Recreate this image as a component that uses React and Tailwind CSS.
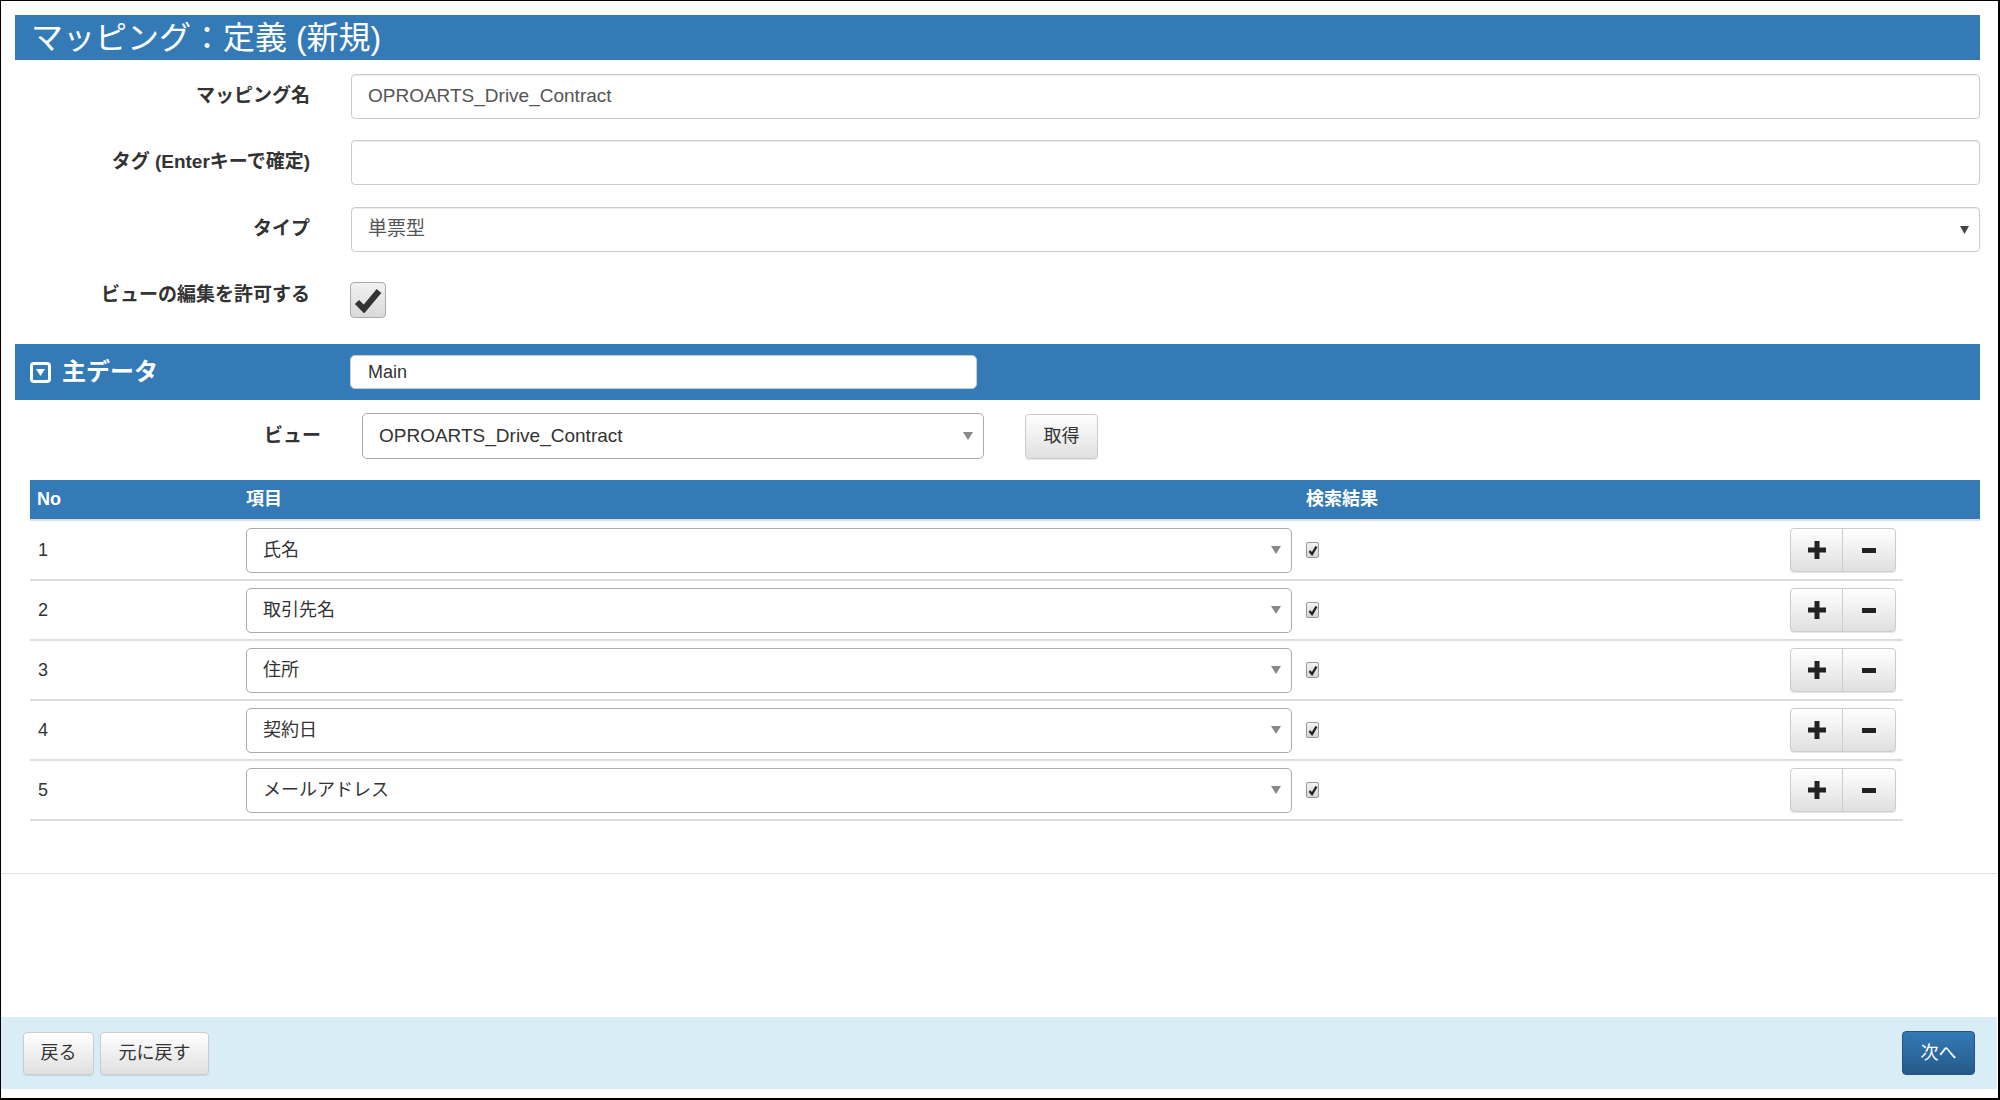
import React from 'react';

const rows = ['氏名', '取引先名', '住所', '契約日', 'メールアドレス'];

function GrayArrow() {
  return (
    <svg width="10" height="8" viewBox="0 0 10 8" className="shrink-0">
      <path d="M0 0 L10 0 L5 8 Z" fill="#888" />
    </svg>
  );
}

function SmallCheck() {
  return (
    <div className="w-[13px] h-[16px] rounded-[2px] border border-[#999] bg-linear-to-b from-[#f4f4f4] to-[#d6d6d6] flex items-center justify-center">
      <svg width="10" height="11" viewBox="0 0 10 11">
        <path d="M1.5 6 L4 9 L8.5 1.5" fill="none" stroke="#222" strokeWidth="2.4" />
      </svg>
    </div>
  );
}

function GradBtn({ children, className = '' }) {
  return (
    <button
      className={`bg-linear-to-b from-white to-[#e0e0e0] border border-[#ccc] rounded-[4px] shadow-[0_1px_1px_rgba(0,0,0,0.1)] text-[18px] text-[#333] flex items-center justify-center ${className}`}
    >
      {children}
    </button>
  );
}

export default function App() {
  return (
    <div className="w-[2000px] h-[1100px] border-l border-t border-r-2 border-b-2 border-black bg-white flex flex-col text-[#333] font-['Liberation_Sans','Noto_Sans_CJK_JP',sans-serif]">
      <div className="pl-[14px] pr-[18px]">
        {/* Title */}
        <div className="mt-[14px] h-[45px] bg-[#337ab7] text-white text-[32px] pl-[16px] flex items-center leading-none">
          マッピング：定義 (新規)
        </div>

        {/* Form */}
        <div className="mt-[14px] flex items-center">
          <div className="w-[295px] text-right text-[19px] font-bold">マッピング名</div>
          <div className="ml-[41px] flex-1 h-[45px] border border-[#ccc] rounded-[4px] shadow-[inset_0_1px_1px_rgba(0,0,0,0.075)] flex items-center pl-[16px] text-[19px] text-[#555]">
            OPROARTS_Drive_Contract
          </div>
        </div>
        <div className="mt-[21px] flex items-center">
          <div className="w-[295px] text-right text-[19px] font-bold">タグ (Enterキーで確定)</div>
          <div className="ml-[41px] flex-1 h-[45px] border border-[#ccc] rounded-[4px] shadow-[inset_0_1px_1px_rgba(0,0,0,0.075)]" />
        </div>
        <div className="mt-[22px] flex items-center">
          <div className="w-[295px] text-right text-[19px] font-bold">タイプ</div>
          <div className="ml-[41px] flex-1 h-[45px] border border-[#ccc] rounded-[4px] shadow-[inset_0_1px_1px_rgba(0,0,0,0.075)] flex items-center pl-[16px] pr-[10px] text-[19px] text-[#555]">
            <span className="flex-1">単票型</span>
            <svg width="9" height="8" viewBox="0 0 9 8">
              <path d="M0 0 L9 0 L4.5 8 Z" fill="#444" />
            </svg>
          </div>
        </div>
        <div className="mt-[30px] flex items-start">
          <div className="w-[295px] text-right text-[19px] font-bold leading-[26px]">ビューの編集を許可する</div>
          <div className="ml-[40px] w-[36px] h-[36px] rounded-[4px] border border-[#aaa] bg-linear-to-b from-[#f2f2f2] to-[#d9d9d9] flex items-center justify-center">
            <svg width="28" height="26" viewBox="0 0 28 26">
              <path d="M3 15 L10 22 L25 4" fill="none" stroke="#333" strokeWidth="6" />
            </svg>
          </div>
        </div>

        {/* Section bar */}
        <div className="mt-[26px] h-[56px] bg-[#337ab7] flex items-center">
          <div className="w-[335px] flex items-center pl-[15px] text-white">
            <div className="w-[21px] h-[21px] rounded-[4px] border-[3px] border-white flex items-center justify-center">
              <svg width="9" height="7" viewBox="0 0 9 7">
                <path d="M0 0 L9 0 L4.5 7 Z" fill="white" />
              </svg>
            </div>
            <span className="ml-[11px] text-[24px] font-bold leading-none">主データ</span>
          </div>
          <div className="w-[627px] h-[34px] bg-white rounded-[5px] border border-[#ccc] flex items-center pl-[17px] text-[18px] text-[#333]">
            Main
          </div>
        </div>

        {/* View row */}
        <div className="mt-[13px] flex items-center">
          <div className="w-[306px] text-right text-[19px] font-bold">ビュー</div>
          <div className="ml-[41px] w-[622px] h-[46px] border border-[#aaa] rounded-[5px] flex items-center pl-[16px] pr-[10px] text-[19px] text-[#333]">
            <span className="flex-1">OPROARTS_Drive_Contract</span>
            <GrayArrow />
          </div>
          <GradBtn className="ml-[41px] w-[73px] h-[45px]">取得</GradBtn>
        </div>

        {/* Table */}
        <div className="mt-[21px] ml-[15px]">
          <div className="h-[41px] bg-[#337ab7] border-b-2 border-[#ddd] flex items-center text-white text-[18px] font-bold">
            <div className="w-[216px] pl-[7px]">No</div>
            <div className="w-[1060px]">項目</div>
            <div>検索結果</div>
          </div>
          <div className="w-[1873px]">
            {rows.map((r, i) => (
              <div key={i} className="h-[60px] border-b-2 border-[#ddd] flex items-center text-[18px]">
                <div className="w-[216px] pl-[8px]">{i + 1}</div>
                <div className="w-[1046px] h-[45px] border border-[#aaa] rounded-[5px] flex items-center pl-[16px] pr-[10px] text-[#333]">
                  <span className="flex-1">{r}</span>
                  <GrayArrow />
                </div>
                <div className="ml-[14px]">
                  <SmallCheck />
                </div>
                <div className="ml-auto mr-[7px] flex h-[44px] rounded-[4px] border border-[#ccc] bg-linear-to-b from-white to-[#e0e0e0] shadow-[0_1px_1px_rgba(0,0,0,0.1)]">
                  <div className="w-[52px] flex items-center justify-center border-r border-[#ccc]">
                    <svg width="18" height="18" viewBox="0 0 18 18">
                      <path d="M6.5 0 H11.5 V6.5 H18 V11.5 H11.5 V18 H6.5 V11.5 H0 V6.5 H6.5 Z" fill="#222" />
                    </svg>
                  </div>
                  <div className="w-[52px] flex items-center justify-center">
                    <svg width="14" height="5" viewBox="0 0 14 5">
                      <rect width="14" height="5" fill="#222" />
                    </svg>
                  </div>
                </div>
              </div>
            ))}
          </div>
        </div>
      </div>

      <div className="mt-[52px] h-px bg-[#ddd]" />
      <div className="flex-1" />

      {/* Footer */}
      <div className="mb-[9px] mr-[1px] h-[72px] bg-[#d9edf7] flex items-center px-[22px]">
        <GradBtn className="w-[71px] h-[43px]">戻る</GradBtn>
        <GradBtn className="ml-[6px] w-[109px] h-[43px]">元に戻す</GradBtn>
        <button className="ml-auto w-[73px] h-[44px] rounded-[4px] border border-[#245580] bg-linear-to-b from-[#337ab7] to-[#265a88] text-white text-[18px] flex items-center justify-center">
          次へ
        </button>
      </div>
    </div>
  );
}
